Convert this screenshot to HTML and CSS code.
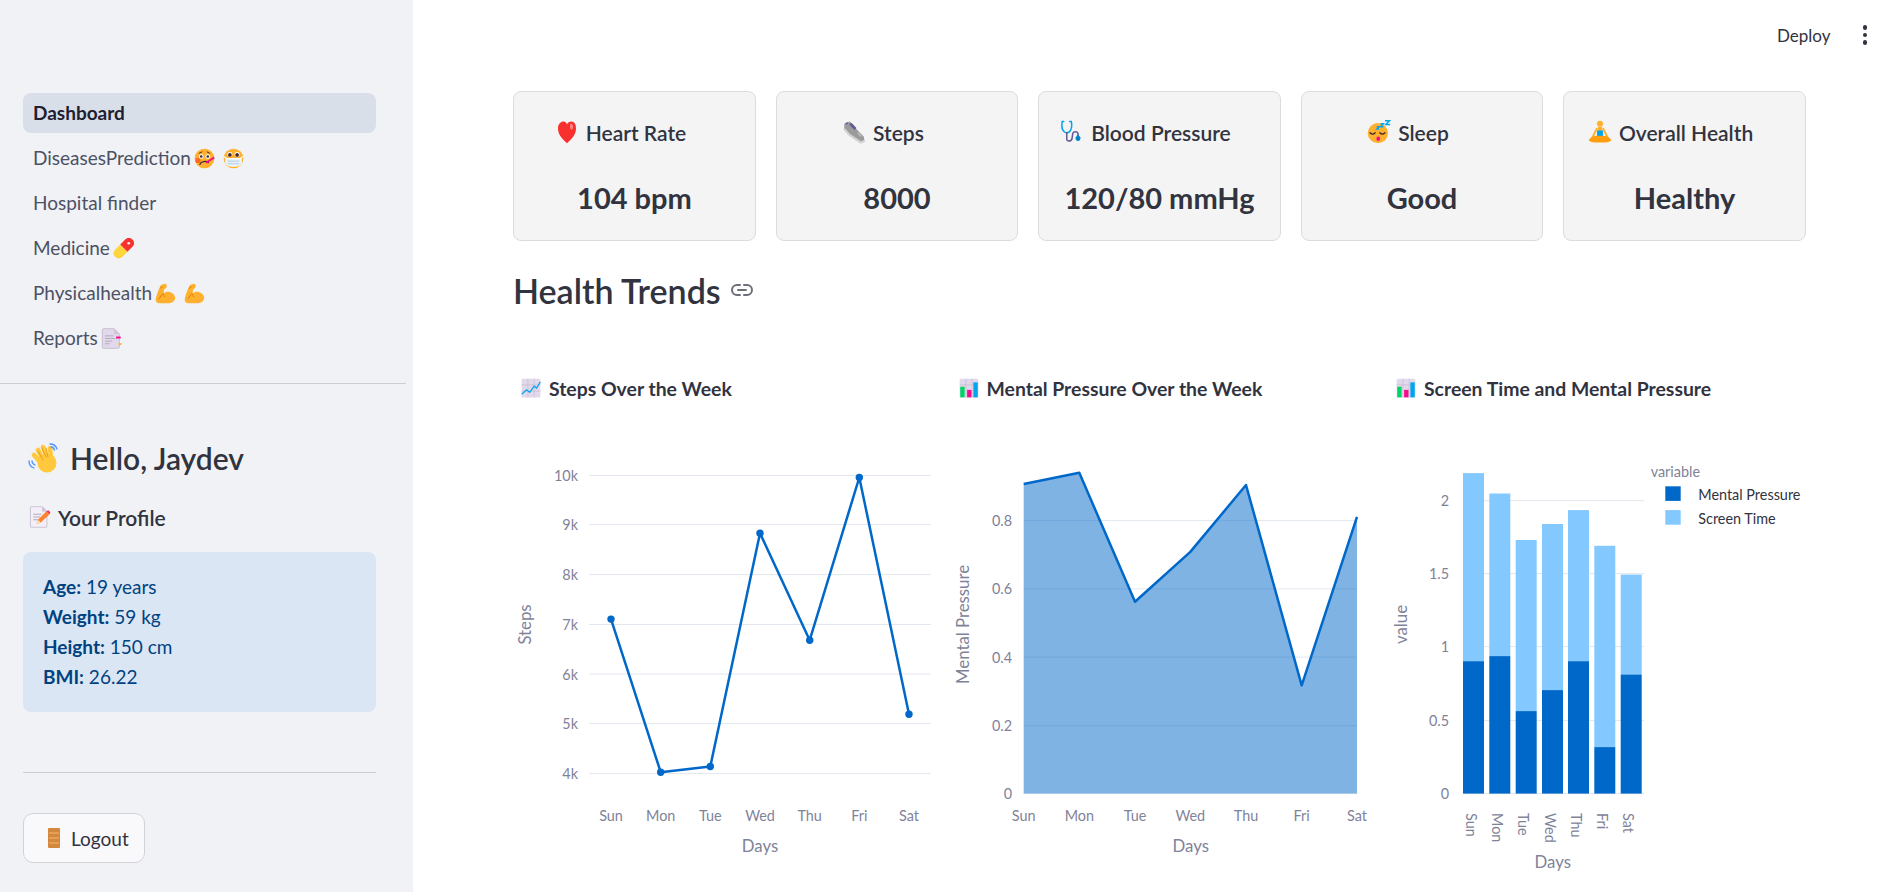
FILE: index.html
```html
<!DOCTYPE html>
<html lang="en">
<head>
    <meta charset="UTF-8">
    <title>Dashboard</title>
    <link rel="stylesheet" href="styles.css">
</head>
<body>
<svg class="icon-defs" width="0" height="0" aria-hidden="true">
    <symbol id="i-sick" viewBox="0 0 32 32">
        <circle cx="16" cy="16" r="15" fill="#ffb02e"/>
        <circle cx="6" cy="19" r="4" fill="#ff6723"/>
        <circle cx="11" cy="13" r="3.500" fill="#fff"/><circle cx="21" cy="13" r="3.500" fill="#fff"/>
        <circle cx="11" cy="13" r="2" fill="#402a32"/><circle cx="21" cy="13" r="2" fill="#402a32"/>
        <path d="M8 8l4-2M20 6l4 2" stroke="#402a32" stroke-width="1.400" stroke-linecap="round"/>
        <path d="M9 25c1-4 9-6 13-3" fill="none" stroke="#402a32" stroke-width="2" stroke-linecap="round"/>
        <path d="M19 22l11-7" stroke="#f70a8d" stroke-width="2.600" stroke-linecap="round"/>
    </symbol>
    <symbol id="i-mask" viewBox="0 0 32 32">
        <circle cx="16" cy="16" r="15" fill="#ffb02e"/>
        <circle cx="10.500" cy="10" r="3.800" fill="#fff"/><circle cx="21.500" cy="10" r="3.800" fill="#fff"/>
        <circle cx="10.500" cy="10.500" r="2.800" fill="#402a32"/><circle cx="21.500" cy="10.500" r="2.800" fill="#402a32"/>
        <path d="M1 13l5 3h20l5-3" fill="none" stroke="#fff" stroke-width="1.800"/>
        <path d="M4 16h24v6c0 4-5 6-12 6S4 26 4 22z" fill="#e8f4fb" stroke="#fff"/>
        <path d="M7 20h18M7 24h18" stroke="#aac7de" stroke-width="1.400"/>
    </symbol>
    <symbol id="i-pill" viewBox="0 0 32 32">
        <path d="M3 18l8-8 11 11-8 8a7.800 7.800 0 0 1-11-11z" fill="#ffd53d"/>
        <path d="M11 10l8-8a7.800 7.800 0 0 1 11 11l-8 8z" fill="#f8312f"/>
        <circle cx="24" cy="8" r="2" fill="#fff"/>
    </symbol>
    <symbol id="i-arm" viewBox="0 0 32 32">
        <path d="M9 3l6-2c2 0 3 2 3 4 0 2-2 4-4 4l-1 7c4-4 10-3 14 0 4 3 5 8 2 11-2 3-6 4-10 4H7c-4 0-6-3-6-6 1-6 4-15 8-22z" fill="#ffb02e"/>
        <path d="M8 8l3-2M9 20l3-4 3 5M6 24l3-4" fill="none" stroke="#d67d00" stroke-width="1.300" stroke-linecap="round"/>
    </symbol>
    <symbol id="i-report" viewBox="0 0 32 32">
        <path d="M4 1h16l8 8v20a2 2 0 0 1-2 2H4a2 2 0 0 1-2-2V3a2 2 0 0 1 2-2z" fill="#e1d8ec" stroke="#c8bfd2" stroke-width="1.500"/>
        <path d="M20 1v8h8z" fill="#cdc4d6"/>
        <path d="M6 12h13M6 16h16M6 20h11M6 24h7" stroke="#b4acbc" stroke-width="1.500"/>
        <rect x="23" y="13" width="7" height="3" fill="#f70a8d"/>
        <rect x="27" y="23" width="4" height="3" fill="#ffb02e"/>
    </symbol>
    <symbol id="i-memo" viewBox="0 0 32 32">
        <path d="M4 1h15l7 7v21a2 2 0 0 1-2 2H4a2 2 0 0 1-2-2V3a2 2 0 0 1 2-2z" fill="#f3eef8" stroke="#cdc4d6" stroke-width="1.500"/>
        <path d="M19 1v7h7z" fill="#cdc4d6"/>
        <path d="M6 12h12M6 16h10M6 20h7" stroke="#b4acbc" stroke-width="1.500"/>
        <path d="M11 26l2-6 12-12 5 4-13 12z" fill="#ff822d"/>
        <path d="M11 26l2-6 4 4z" fill="#ffdea7"/>
        <path d="M25 8l3-2 3 3-1 3z" fill="#f92f60"/>
    </symbol>
    <symbol id="i-wave" viewBox="0 0 32 32">
        <path d="M13 21L6 13M15 18L10 8M19 16L15 5M23 17l-1-11" stroke="#ffc83d" stroke-width="4.600" stroke-linecap="round"/>
        <circle cx="19" cy="21" r="9.500" fill="#ffc83d"/>
        <path d="M10 9l5 9M14 6l4 9M18 6l2 9" stroke="#e39a12" stroke-width="0.900" stroke-linecap="round"/>
        <path d="M22 2c3 0 6 2 7 5M23 5c1.500 0 3 1 3.500 3M1 19c0 3 2 6 5 7M4 19c0 2 1 3 3 4" fill="none" stroke="#5092ff" stroke-width="1.300" stroke-linecap="round"/>
    </symbol>
    <symbol id="i-door" viewBox="0 0 12 20">
        <rect width="12" height="20" rx="1" fill="#d3883e"/>
        <path d="M1 5h10M1 10h10M1 15h10" stroke="#e9a85e" stroke-width="1.500"/>
    </symbol>
    <symbol id="i-heart" viewBox="0 0 32 32">
        <path d="M16 31C9 25 4 19 4 11 4 5 8 2 11 2c3 0 4 1 5 4 1-3 3-4 6-4 4 0 6 4 6 9 0 8-5 14-12 20z" fill="#f8312f"/>
        <path d="M21 5c2 0 3 2 3 4s-1 4-2 4-2-2-2-4 0-4 1-4z" fill="#ff8687"/>
    </symbol>
    <symbol id="i-shoe" viewBox="0 0 32 32">
        <path d="M3 5l7-3 5 4 5 7 9 9 1 6-5 2L10 20 3 12z" fill="#9b9b9b"/>
        <path d="M3 12l7 8 15 10 5-2" fill="none" stroke="#d3d3d3" stroke-width="3"/>
        <path d="M11 5l7 7" stroke="#635994" stroke-width="3.500"/>
        <path d="M5 5l3-1" stroke="#635994" stroke-width="2"/>
        <path d="M21 17l5 5" stroke="#bebebe" stroke-width="2"/>
    </symbol>
    <symbol id="i-steth" viewBox="0 0 32 32">
        <path d="M5 2H3c-1 5-1 11 3 14 3 2 6 1 8-2 2-4 2-8 1-12h-2" fill="none" stroke="#00a6ed" stroke-width="2" stroke-linecap="round"/>
        <path d="M9 16v9c0 4 6 4 7 0l1-7c1-3 6-3 7 0v3" fill="none" stroke="#635994" stroke-width="2"/>
        <path d="M24 19l3 4c1 3-1 5-3 5s-4-2-3-5z" fill="#0084ce"/>
    </symbol>
    <symbol id="i-sleep" viewBox="0 0 32 32">
        <circle cx="14.500" cy="17.500" r="13.500" fill="#ffb02e"/>
        <path d="M4 17c2 2 5 2 7 0M17 17c2 2 5 2 7 0" fill="none" stroke="#402a32" stroke-width="1.600" stroke-linecap="round"/>
        <ellipse cx="15" cy="25" rx="2.500" ry="3" fill="#f70a8d"/>
        <path d="M24 1h6l-5 5h6M18 5h4l-4 4h4M13 9h3l-3 3h3" fill="none" stroke="#00a6ed" stroke-width="1.800"/>
    </symbol>
    <symbol id="i-lotus" viewBox="0 0 32 32">
        <circle cx="16" cy="5" r="4" fill="#ffb02e"/>
        <path d="M13 9h6v12h-6z" fill="#ffb02e"/>
        <path d="M12 14h8v9h-8z" fill="#00a6ed"/>
        <path d="M12 11L5 25M20 11l7 14" stroke="#ffb02e" stroke-width="2.500"/>
        <path d="M1 27c3-6 9-6 15-6s12 0 15 6c-2 3-8 3-15 3s-13 0-15-3z" fill="#ff9f10"/>
    </symbol>
    <symbol id="i-trend" viewBox="0 0 32 32">
        <rect x="1" y="1" width="30" height="30" rx="2" fill="#e1d8ec"/>
        <path d="M1 11h30M1 21h30M11 1v30M21 1v30" stroke="#c4bacd" stroke-width="1"/>
        <path d="M1 26l8-7 5 4 7-10 4 3 6-10" fill="none" stroke="#00a6ed" stroke-width="2"/>
    </symbol>
    <symbol id="i-bars" viewBox="0 0 32 32">
        <rect x="1" y="1" width="30" height="30" rx="2" fill="#e1d8ec"/>
        <path d="M1 11h30M11 1v30M21 1v30" stroke="#c4bacd" stroke-width="1"/>
        <rect x="2" y="14" width="7" height="17" fill="#00d26a"/>
        <rect x="13" y="19" width="7" height="12" fill="#f70a8d"/>
        <rect x="23" y="7" width="7" height="24" fill="#00a6ed"/>
    </symbol>
</svg>

<div class="app">
    <aside class="sidebar">
        <nav class="side-nav">
            <a class="nav-item active">Dashboard</a>
            <a class="nav-item">DiseasesPrediction <svg class="emoji"><use href="#i-sick"/></svg> <svg class="emoji"><use href="#i-mask"/></svg></a>
            <a class="nav-item">Hospital finder</a>
            <a class="nav-item">Medicine <svg class="emoji"><use href="#i-pill"/></svg></a>
            <a class="nav-item">Physicalhealth <svg class="emoji"><use href="#i-arm"/></svg> <svg class="emoji"><use href="#i-arm"/></svg></a>
            <a class="nav-item">Reports <svg class="emoji"><use href="#i-report"/></svg></a>
        </nav>
        <hr class="nav-rule">
        <div class="side-body">
            <h2 class="hello"><svg class="emoji-hello"><use href="#i-wave"/></svg>Hello, Jaydev</h2>
            <h3 class="profile-title"><svg class="emoji-profile"><use href="#i-memo"/></svg>Your Profile</h3>
            <div class="info-box">
                <div><strong>Age:</strong> 19 years</div>
                <div><strong>Weight:</strong> 59 kg</div>
                <div><strong>Height:</strong> 150 cm</div>
                <div><strong>BMI:</strong> 26.22</div>
            </div>
            <hr class="side-rule">
            <button class="logout"><svg class="door"><use href="#i-door"/></svg>Logout</button>
        </div>
    </aside>

    <main class="main">
        <header class="topbar">
            <span class="deploy">Deploy</span>
            <span class="kebab"><i></i><i></i><i></i></span>
        </header>
        <div class="content">
            <section class="cards">
                <div class="card">
                    <div class="card-label"><svg class="emoji-card"><use href="#i-heart"/></svg>Heart Rate</div>
                    <div class="card-value">104 bpm</div>
                </div>
                <div class="card">
                    <div class="card-label"><svg class="emoji-card"><use href="#i-shoe"/></svg>Steps</div>
                    <div class="card-value">8000</div>
                </div>
                <div class="card">
                    <div class="card-label"><svg class="emoji-card"><use href="#i-steth"/></svg>Blood Pressure</div>
                    <div class="card-value">120/80 mmHg</div>
                </div>
                <div class="card">
                    <div class="card-label"><svg class="emoji-card"><use href="#i-sleep"/></svg>Sleep</div>
                    <div class="card-value">Good</div>
                </div>
                <div class="card">
                    <div class="card-label"><svg class="emoji-card"><use href="#i-lotus"/></svg>Overall Health</div>
                    <div class="card-value">Healthy</div>
                </div>
            </section>

            <h2 class="section-title">Health Trends
                <svg class="link-icon" viewBox="0 0 24 24"><path d="M10 7H7a5 5 0 0 0 0 10h3M14 7h3a5 5 0 0 1 0 10h-3M8 12h8" fill="none" stroke="#6d6f7a" stroke-width="2" stroke-linecap="round"/></svg>
            </h2>

            <section class="charts">
                <div class="chart">
                    <h4 class="chart-title"><svg class="emoji-chart"><use href="#i-trend"/></svg>Steps Over the Week</h4>
                    <svg class="plot" width="418" height="478" viewBox="513 404 418 478">
                        <g class="grid">
                            <path d="M589 476.500H931M589 525.400H931M589 575.600H931M589 625.500H931M589 675.100H931M589 724.700H931M589 774.600H931"/>
                        </g>
                        <g class="tick to-right">
                            <text x="578" y="476.500">10k</text><text x="578" y="525.400">9k</text><text x="578" y="575.600">8k</text>
                            <text x="578" y="625.500">7k</text><text x="578" y="675.100">6k</text><text x="578" y="724.700">5k</text><text x="578" y="774.600">4k</text>
                        </g>
                        <polyline class="line" points="611,620.100 660.700,773.200 710.300,767.500 760,534.200 809.700,641.200 859.300,478.500 909,715.200"/>
                        <g class="dots">
                            <circle cx="611" cy="620.100" r="3.700"/><circle cx="660.700" cy="773.200" r="3.700"/><circle cx="710.300" cy="767.500" r="3.700"/>
                            <circle cx="760" cy="534.200" r="3.700"/><circle cx="809.700" cy="641.200" r="3.700"/><circle cx="859.300" cy="478.500" r="3.700"/><circle cx="909" cy="715.200" r="3.700"/>
                        </g>
                        <g class="tick to-mid">
                            <text x="611" y="816">Sun</text><text x="660.700" y="816">Mon</text><text x="710.300" y="816">Tue</text><text x="760" y="816">Wed</text>
                            <text x="809.700" y="816">Thu</text><text x="859.300" y="816">Fri</text><text x="909" y="816">Sat</text>
                        </g>
                        <text class="axis-title to-mid" x="760" y="846">Days</text>
                        <text class="axis-title to-mid" transform="translate(524 625.500) rotate(-90)">Steps</text>
                    </svg>
                </div>

                <div class="chart">
                    <h4 class="chart-title"><svg class="emoji-chart"><use href="#i-bars"/></svg>Mental Pressure Over the Week</h4>
                    <svg class="plot" width="418" height="478" viewBox="951 404 418 478">
                        <g class="grid">
                            <path d="M1023.700 521.600H1357M1023.700 589.900H1357M1023.700 658.100H1357M1023.700 726.700H1357M1023.700 794.600H1357"/>
                        </g>
                        <polygon class="area" points="1023.700,485 1079.300,473.800 1135,602.800 1190.300,552.900 1246,486 1301.700,686.300 1357,517.900 1357,794.600 1023.700,794.600"/>
                        <polyline class="line" points="1023.700,485 1079.300,473.800 1135,602.800 1190.300,552.900 1246,486 1301.700,686.300 1357,517.900"/>
                        <g class="tick to-right">
                            <text x="1012" y="521.600">0.8</text><text x="1012" y="589.900">0.6</text><text x="1012" y="658.100">0.4</text>
                            <text x="1012" y="726.700">0.2</text><text x="1012" y="794.600">0</text>
                        </g>
                        <g class="tick to-mid">
                            <text x="1023.700" y="816">Sun</text><text x="1079.300" y="816">Mon</text><text x="1135" y="816">Tue</text><text x="1190.300" y="816">Wed</text>
                            <text x="1246" y="816">Thu</text><text x="1301.700" y="816">Fri</text><text x="1357" y="816">Sat</text>
                        </g>
                        <text class="axis-title to-mid" x="1190.700" y="846">Days</text>
                        <text class="axis-title to-mid" transform="translate(962.700 625.500) rotate(-90)">Mental Pressure</text>
                    </svg>
                </div>

                <div class="chart">
                    <h4 class="chart-title"><svg class="emoji-chart"><use href="#i-bars"/></svg>Screen Time and Mental Pressure</h4>
                    <svg class="plot" width="418" height="478" viewBox="1388 404 418 478">
                        <g class="grid">
                            <path d="M1462.700 501.600H1644M1462.700 574.600H1644M1462.700 647.600H1644M1462.700 721.600H1644M1462.700 794.600H1644"/>
                        </g>
                        <g class="bar-light">
                            <rect x="1463" y="474.100" width="21" height="188.100"/><rect x="1489.300" y="494.500" width="21" height="162.600"/>
                            <rect x="1515.700" y="541" width="21" height="171.100"/><rect x="1542" y="525" width="21" height="166.100"/>
                            <rect x="1568" y="511.100" width="21" height="151.100"/><rect x="1594.300" y="546.800" width="21" height="201.300"/>
                            <rect x="1620.700" y="575.600" width="21" height="99.900"/>
                        </g>
                        <g class="bar-dark">
                            <rect x="1463" y="662.200" width="21" height="132.400"/><rect x="1489.300" y="657.100" width="21" height="137.500"/>
                            <rect x="1515.700" y="712.100" width="21" height="82.500"/><rect x="1542" y="691.100" width="21" height="103.500"/>
                            <rect x="1568" y="662.200" width="21" height="132.400"/><rect x="1594.300" y="748.100" width="21" height="46.500"/>
                            <rect x="1620.700" y="675.500" width="21" height="119.100"/>
                        </g>
                        <g class="tick to-right">
                            <text x="1449" y="501.600">2</text><text x="1449" y="574.600">1.5</text><text x="1449" y="647.600">1</text>
                            <text x="1449" y="721.600">0.5</text><text x="1449" y="794.600">0</text>
                        </g>
                        <g class="tick-vert">
                            <text transform="translate(1465.500 814) rotate(90)">Sun</text><text transform="translate(1491.800 814) rotate(90)">Mon</text>
                            <text transform="translate(1518.200 814) rotate(90)">Tue</text><text transform="translate(1544.500 814) rotate(90)">Wed</text>
                            <text transform="translate(1570.500 814) rotate(90)">Thu</text><text transform="translate(1596.800 814) rotate(90)">Fri</text>
                            <text transform="translate(1623.200 814) rotate(90)">Sat</text>
                        </g>
                        <text class="axis-title to-mid" x="1552.700" y="862">Days</text>
                        <text class="axis-title to-mid" transform="translate(1400.700 625.500) rotate(-90)">value</text>
                        <text class="tick" x="1650.700" y="472">variable</text>
                        <rect class="swatch-dark" x="1665.300" y="487.300" width="15.400" height="14.600"/>
                        <rect class="swatch-light" x="1665.300" y="511.100" width="15.400" height="14.600"/>
                        <text class="legend-text" x="1698.300" y="495.100">Mental Pressure</text>
                        <text class="legend-text" x="1698.300" y="519.300">Screen Time</text>
                    </svg>
                </div>
            </section>
        </div>
    </main>
</div>
</body>
</html>
```

FILE: styles.css
```css
* {
    box-sizing: border-box;
}

body {
    margin: 0;
    font-family: Lato, "Open Sans", sans-serif;
    color: #31333f;
    background-color: #fff;
}

.icon-defs {
    position: absolute;
}

.app {
    display: flex;
    height: 100vh;
    overflow: hidden;
}

/* sidebar */
.sidebar {
    flex: 0 0 413px;
    background-color: #f0f2f6;
    padding-top: 93px;
}

.side-nav {
    display: flex;
    flex-direction: column;
    gap: 5px;
    padding: 0 37px 0 23px;
}

.nav-item {
    display: block;
    height: 40px;
    line-height: 39px;
    padding-left: 10px;
    border-radius: 8px;
    font-size: 19px;
    color: #4d5163;
    white-space: nowrap;
}

.nav-item.active {
    background-color: #d9dfe9;
    color: #1e2030;
    font-weight: 700;
}

.emoji {
    width: 21px;
    height: 21px;
    margin-left: -2px;
    vertical-align: -4px;
}

.emoji + .emoji {
    margin-left: 3px;
}

.nav-rule {
    margin: 25px 7px 0 0;
    border: 0;
    border-top: 1px solid #cdced4;
}

.side-body {
    padding: 0 37px 0 23px;
}

.hello {
    display: flex;
    align-items: center;
    margin: 52px 0 0 5px;
    height: 44px;
    font-size: 30px;
    font-weight: 600;
}

.emoji-hello {
    width: 32px;
    height: 32px;
    margin-right: 10px;
}

.profile-title {
    display: flex;
    align-items: center;
    margin: 21px 0 0 6px;
    height: 32px;
    font-size: 21px;
    font-weight: 600;
}

.emoji-profile {
    width: 22px;
    height: 24px;
    margin-right: 7px;
}

.info-box {
    height: 160px;
    margin-top: 19px;
    padding: 20px 20px;
    border-radius: 8px;
    background-color: #dbe6f4;
    color: #004280;
    font-size: 19px;
    line-height: 30px;
}

.side-rule {
    margin: 60px 0 0;
    border: 0;
    border-top: 1px solid #cdced4;
}

.logout {
    display: flex;
    align-items: center;
    width: 122px;
    height: 50px;
    margin-top: 40px;
    padding: 0 0 0 24px;
    border: 1px solid #d2d3d9;
    border-radius: 10px;
    background-color: #f9f9fb;
    color: #31333f;
    font-family: inherit;
    font-size: 19px;
}

.door {
    width: 12px;
    height: 20px;
    margin-right: 11px;
}

/* main */
.main {
    flex: 1;
    min-width: 0;
}

.topbar {
    display: flex;
    align-items: center;
    justify-content: flex-end;
    height: 70px;
    padding-right: 16px;
}

.deploy {
    font-size: 17px;
    margin-right: 32px;
}

.kebab {
    display: flex;
    flex-direction: column;
    gap: 3px;
}

.kebab i {
    width: 4.500px;
    height: 4.500px;
    border-radius: 50%;
    background-color: #31333f;
}

.content {
    padding: 21px 77px 0 100px;
}

.cards {
    display: grid;
    grid-template-columns: repeat(5, 1fr);
    gap: 19.600px;
}

.card {
    height: 150px;
    padding: 24px 0 0;
    border: 1px solid #dcdcdc;
    border-radius: 8px;
    background-color: #f4f4f4;
    text-align: center;
}

.card-label {
    display: flex;
    align-items: center;
    justify-content: center;
    height: 32px;
    padding-right: 28px;
    font-size: 21px;
    font-weight: 600;
}

.emoji-card {
    width: 24px;
    height: 24px;
    margin-right: 7px;
}

.card-value {
    margin-top: 32px;
    font-size: 29px;
    line-height: 36px;
    font-weight: 700;
}

.section-title {
    display: flex;
    align-items: center;
    margin: 27px 0 0;
    height: 44px;
    font-size: 34px;
    font-weight: 600;
}

.link-icon {
    width: 24px;
    height: 24px;
    margin-left: 9px;
}

.charts {
    display: grid;
    grid-template-columns: repeat(3, 418px);
    gap: 19.500px;
    margin-top: 61px;
}

.chart-title {
    display: flex;
    align-items: center;
    height: 30px;
    margin: 0;
    padding-left: 8px;
    font-size: 19.400px;
    font-weight: 700;
}

.emoji-chart {
    width: 20px;
    height: 20px;
    margin-right: 8px;
}

.plot {
    display: block;
}

.plot text {
    dominant-baseline: central;
}

.grid path {
    fill: none;
    stroke: #e2e6ee;
    stroke-width: 1px;
}

.tick text,
text.tick {
    fill: #7f8399;
    font-size: 14.400px;
}

.tick-vert text {
    fill: #7f8399;
    font-size: 14.400px;
    dominant-baseline: auto;
}

.to-right text {
    text-anchor: end;
}

.to-mid text,
text.to-mid {
    text-anchor: middle;
}

.axis-title {
    fill: #7f8399;
    font-size: 16.800px;
}

.legend-text {
    fill: #31333f;
    font-size: 14.400px;
}

.line {
    fill: none;
    stroke: #0068c9;
    stroke-width: 2.500px;
    stroke-linejoin: round;
}

.dots circle {
    fill: #0068c9;
}

.area {
    fill: #0068c9;
    fill-opacity: 0.5;
}

.bar-light rect,
.swatch-light {
    fill: #83c9ff;
}

.bar-dark rect,
.swatch-dark {
    fill: #0068c9;
}
```
